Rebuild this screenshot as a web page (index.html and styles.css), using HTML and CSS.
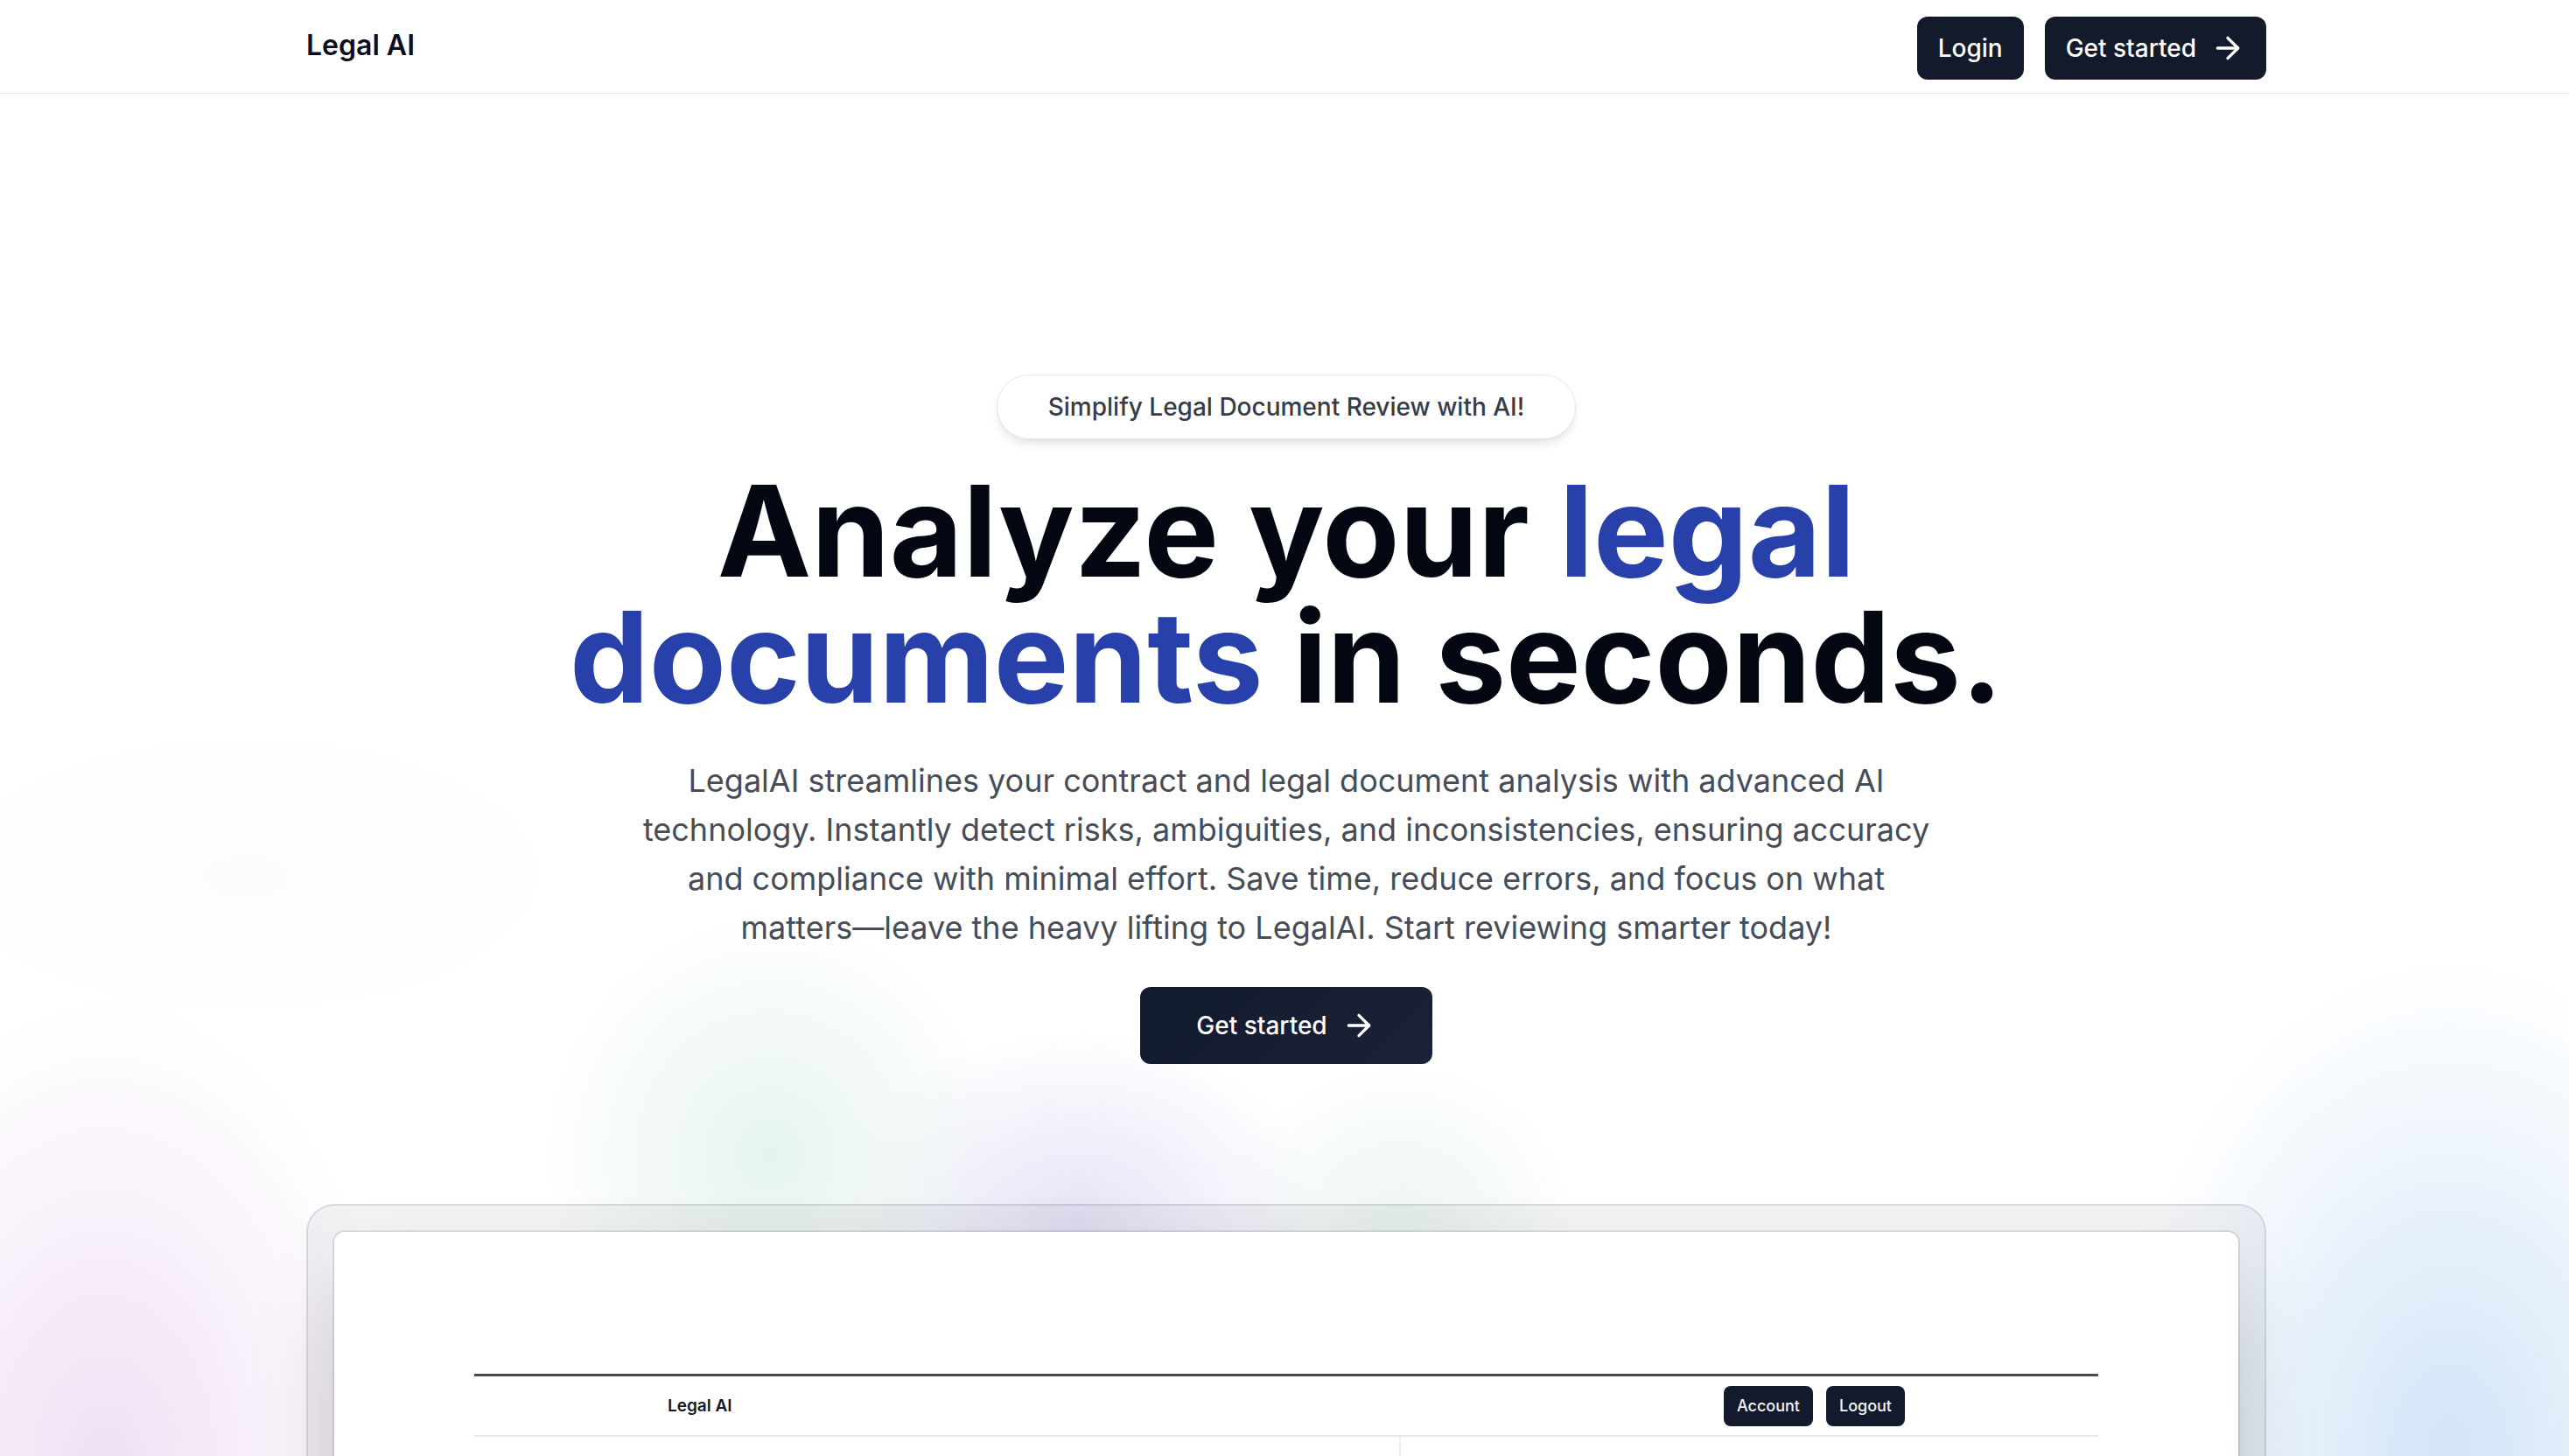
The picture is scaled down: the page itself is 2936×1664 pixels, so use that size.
FILE: index.html
```html
<!DOCTYPE html>
<html lang="en">
<head>
<meta charset="utf-8">
<title>Legal AI</title>
<link rel="stylesheet" href="styles.css">
</head>
<body>
<div class="page">
  <header class="site-header">
    <div class="container header-inner">
      <a class="logo" href="#">Legal AI</a>
      <nav class="header-actions">
        <a class="btn btn-sm" href="#">Login</a>
        <a class="btn btn-sm" href="#">Get started
          <svg class="icon" viewBox="0 0 24 24" fill="none" stroke="currentColor" stroke-width="2" stroke-linecap="round" stroke-linejoin="round"><path d="M5 12h14"/><path d="m12 5 7 7-7 7"/></svg>
        </a>
      </nav>
    </div>
  </header>
  <main class="hero">
    <div class="container hero-inner">
      <div class="badge">Simplify Legal Document Review with AI!</div>
      <h1 class="headline">Analyze your <span class="accent">legal documents</span> in seconds.</h1>
      <p class="lead">LegalAI streamlines your contract and legal document analysis with advanced AI technology. Instantly detect risks, ambiguities, and inconsistencies, ensuring accuracy and compliance with minimal effort. Save time, reduce errors, and focus on what matters—leave the heavy lifting to LegalAI. Start reviewing smarter today!</p>
      <a class="btn btn-cta" href="#">Get started
        <svg class="icon" viewBox="0 0 24 24" fill="none" stroke="currentColor" stroke-width="2" stroke-linecap="round" stroke-linejoin="round"><path d="M5 12h14"/><path d="m12 5 7 7-7 7"/></svg>
      </a>
      <div class="frame">
        <div class="screen">
          <div class="app">
            <div class="app-header">
              <span class="app-logo">Legal AI</span>
              <div class="app-actions">
                <span class="mini-btn">Account</span>
                <span class="mini-btn">Logout</span>
              </div>
            </div>
            <div class="app-body">
              <div class="app-col app-col-left"></div>
              <div class="app-col"></div>
            </div>
          </div>
        </div>
      </div>
    </div>
  </main>
</div>
</body>
</html>
```
FILE: styles.css
```css
* { box-sizing: border-box; margin: 0; padding: 0; }
html, body { background: #ffffff; }
body {
  font-family: Inter, "Noto Sans", "Liberation Sans", sans-serif;
  color: #030712;
  -webkit-font-smoothing: antialiased;
}
a { text-decoration: none; color: inherit; }

.page {
  min-height: 100vh;
  background-color: #ffffff;
  background-image:
    radial-gradient(ellipse 460px 720px at 120px 1680px, rgba(238, 222, 243, 0.95), rgba(238, 222, 243, 0) 75%),
    radial-gradient(ellipse 520px 760px at 2800px 1660px, rgba(208, 227, 246, 0.95), rgba(208, 227, 246, 0) 75%),
    radial-gradient(ellipse 360px 380px at 880px 1320px, rgba(226, 242, 234, 0.85), rgba(226, 242, 234, 0) 75%),
    radial-gradient(ellipse 380px 300px at 1230px 1400px, rgba(226, 224, 245, 0.9), rgba(226, 224, 245, 0) 75%),
    radial-gradient(ellipse 280px 260px at 1600px 1400px, rgba(228, 242, 237, 0.7), rgba(228, 242, 237, 0) 75%),
    radial-gradient(ellipse 560px 260px at 280px 1000px, rgba(244, 244, 247, 0.3), rgba(244, 244, 247, 0) 75%);
  background-repeat: no-repeat;
}

.container { width: 2240px; margin-left: calc(50% - 1118px); }

/* Header */
.site-header { border-bottom: 1px solid #e5e7eb; }
.header-inner {
  height: 106px;
  padding-top: 4px;
  display: flex;
  align-items: center;
  justify-content: space-between;
}
.logo {
  font-size: 32px;
  font-weight: 600;
  color: #0b1020;
  margin-bottom: 8px;
}
.header-actions { display: flex; gap: 24px; }

.btn {
  display: inline-flex;
  align-items: center;
  justify-content: center;
  gap: 16px;
  background: #131a2c;
  color: #ffffff;
  font-size: 28px;
  font-weight: 500;
  border-radius: 12px;
}
.btn-sm { height: 72px; padding: 0 24px; }
.icon { width: 40px; height: 40px; flex: none; }

/* Hero */
.hero-inner {
  display: flex;
  flex-direction: column;
  align-items: center;
  text-align: center;
  padding-top: 321px;
}
.badge {
  padding: 16px 58px;
  border: 1px solid #e5e7eb;
  border-radius: 9999px;
  background: #ffffff;
  font-size: 28px;
  line-height: 40px;
  font-weight: 500;
  color: #353d4b;
  box-shadow: 0 8px 12px -2px rgba(0, 0, 0, 0.08), 0 4px 8px -4px rgba(0, 0, 0, 0.08);
}
.headline {
  margin-top: 33px;
  max-width: 1800px;
  font-size: 144px;
  line-height: 1;
  font-weight: 700;
  letter-spacing: 0;
  color: #030712;
}
.accent { color: #2840a9; }
.lead {
  margin-top: 41px;
  max-width: 1500px;
  font-size: 36px;
  line-height: 56px;
  color: #464c58;
}
.btn-cta {
  margin-top: 40px;
  height: 88px;
  padding: 0 64px;
  background: linear-gradient(135deg, #121a2e 0%, #1b2237 100%);
}

/* Screenshot frame */
.frame {
  margin-top: 160px;
  width: 100%;
  padding: 32px;
  border-radius: 32px 32px 0 0;
  background: rgba(17, 24, 39, 0.05);
  box-shadow: inset 0 0 0 2px rgba(17, 24, 39, 0.1);
}
.screen {
  background: #ffffff;
  border-radius: 12px;
  padding: 162px 160px 0;
  box-shadow: 0 0 0 2px rgba(17, 24, 39, 0.1), 0 50px 100px -24px rgba(0, 0, 0, 0.25);
}
.app { border-top: 3px solid #4a4a4a; text-align: left; }
.app-header {
  height: 69px;
  padding: 0 221px;
  display: flex;
  align-items: center;
  justify-content: space-between;
  border-bottom: 2px solid #e7e8ea;
}
.app-logo { font-size: 19px; font-weight: 600; color: #111827; }
.app-actions { display: flex; gap: 15px; }
.mini-btn {
  height: 46px;
  padding: 0 15px;
  display: inline-flex;
  align-items: center;
  border-radius: 8px;
  background: #131a2c;
  color: #f3f4f6;
  font-size: 18px;
  font-weight: 500;
}
.app-body {
  display: grid;
  grid-template-columns: 1059px 1fr;
  height: 420px;
}
.app-col-left { border-right: 2px solid #eeeff1; }
```
